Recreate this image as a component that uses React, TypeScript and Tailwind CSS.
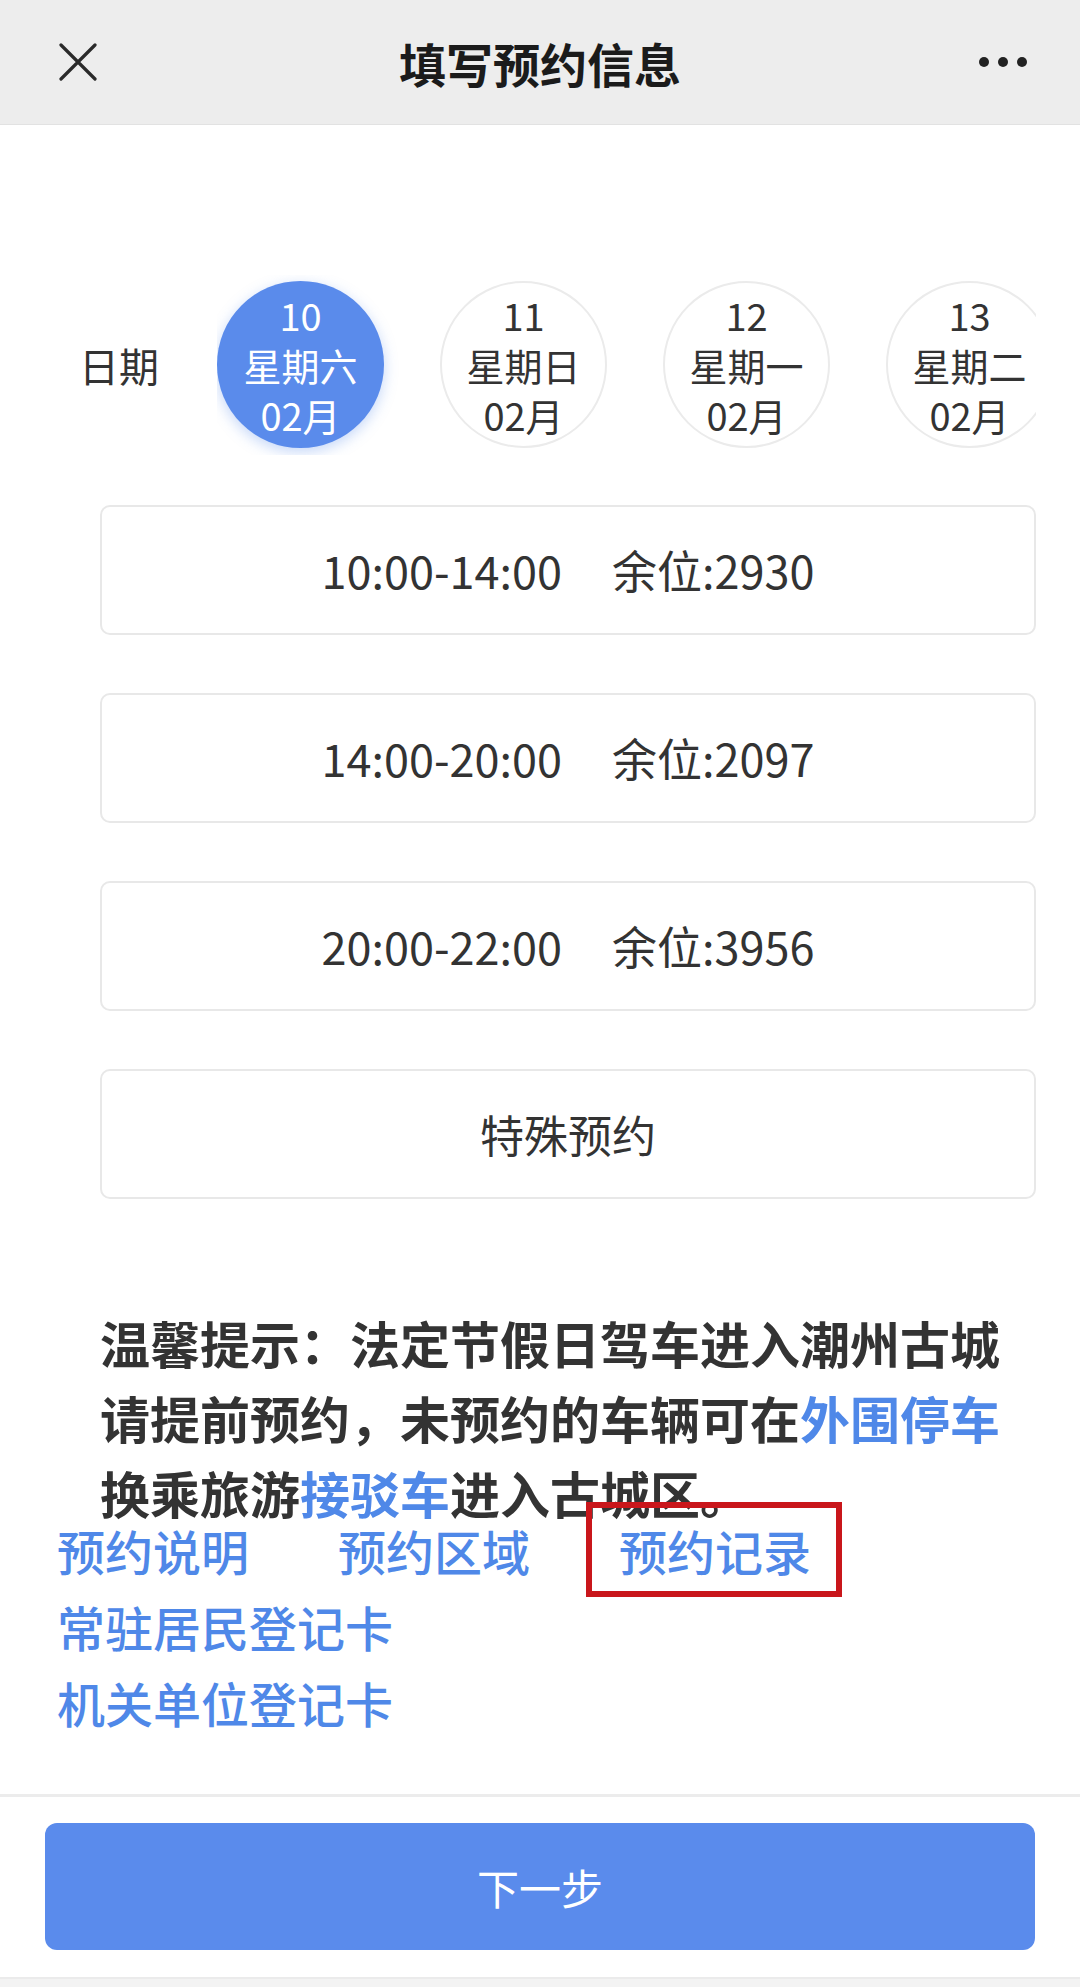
const dates = [
  { day: "10", week: "星期六", month: "02月", active: true },
  { day: "11", week: "星期日", month: "02月", active: false },
  { day: "12", week: "星期一", month: "02月", active: false },
  { day: "13", week: "星期二", month: "02月", active: false },
];

const slots = [
  { time: "10:00-14:00", left: "余位:2930" },
  { time: "14:00-20:00", left: "余位:2097" },
  { time: "20:00-22:00", left: "余位:3956" },
];

const font = { fontFamily: '"Noto Sans CJK SC", "Noto Sans", sans-serif' };

export default function App() {
  return (
    <div className="w-[1080px] h-[1987px] bg-white flex flex-col text-[#333]" style={font}>
      {/* Top bar */}
      <header className="h-[125px] shrink-0 bg-[#ededed] border-b border-[#e2e2e2] flex items-center">
        <div className="w-[140px] pl-[59px]">
          <svg width="38" height="38" viewBox="0 0 38 38" fill="none" stroke="#2a2a2a" strokeWidth="3.2" strokeLinecap="round">
            <path d="M2 2 L36 36 M36 2 L2 36" />
          </svg>
        </div>
        <h1 className="flex-1 text-center text-[47px] font-bold text-[#1b1b1b] leading-none">填写预约信息</h1>
        <div className="w-[140px] pr-[53px] flex justify-end items-center gap-[9px]">
          <span className="w-[10px] h-[10px] rounded-full bg-[#222]" />
          <span className="w-[10px] h-[10px] rounded-full bg-[#222]" />
          <span className="w-[10px] h-[10px] rounded-full bg-[#222]" />
        </div>
      </header>

      {/* Date picker */}
      <div className="mt-[156px] flex items-center pl-[79px] h-[167px]">
        <div className="w-[138px] shrink-0 text-[40px] leading-none text-[#333]">日期</div>
        <div className="w-[819px] h-[180px] overflow-hidden flex items-center gap-[56px]">
          {dates.map((d) => (
            <div
              key={d.day}
              className={
                d.active
                  ? "w-[167px] h-[167px] shrink-0 rounded-full bg-[#5a8beb] text-white flex flex-col items-center justify-center text-[38px] leading-[50px] shadow-[0_4px_14px_rgba(90,139,235,0.35)]"
                  : "w-[167px] h-[167px] shrink-0 rounded-full bg-white border-2 border-[#ebebeb] text-[#333] flex flex-col items-center justify-center text-[38px] leading-[50px]"
              }
            >
              <span>{d.day}</span>
              <span>{d.week}</span>
              <span>{d.month}</span>
            </div>
          ))}
        </div>
      </div>

      {/* Time slots */}
      <div className="mt-[57px] pl-[100px] pr-[44px] flex flex-col gap-[58px]">
        {slots.map((s) => (
          <div
            key={s.time}
            className="h-[130px] rounded-[10px] border-2 border-[#e8e8e8] flex items-center justify-center gap-[50px] text-[45px] text-[#333]"
          >
            <span>{s.time}</span>
            <span>{s.left}</span>
          </div>
        ))}
        <div className="h-[130px] rounded-[10px] border-2 border-[#e8e8e8] flex items-center justify-center text-[44px] text-[#333]">
          特殊预约
        </div>
      </div>

      {/* Notice */}
      <p className="mt-[106px] pl-[100px] pr-[44px] text-[50px] leading-[75px] font-bold text-[#333]">
        温馨提示：法定节假日驾车进入潮州古城请提前预约，未预约的车辆可在
        <span className="text-[#4f88e8]">外围停车</span>
        换乘旅游<span className="text-[#4f88e8]">接驳车</span>进入古城区。
      </p>

      {/* Links */}
      <div className="-mt-[18px] pl-[57px] text-[48px] font-medium text-[#4f88e8]">
        <div className="h-[76px] flex items-center gap-[89px]">
          <span className="leading-[70px]">预约说明</span>
          <span className="leading-[70px]">预约区域</span>
          <span className="relative block leading-[70px]">
            预约记录
            <span className="absolute -left-[33px] -right-[31px] -top-[13px] -bottom-[12px] border-[6px] border-[#c9161b]" />
          </span>
        </div>
        <div className="h-[76px] flex items-center">常驻居民登记卡</div>
        <div className="h-[76px] flex items-center">机关单位登记卡</div>
      </div>

      {/* Footer */}
      <div className="mt-[54px] border-t-[3px] border-[#ececec] pt-[26px] pb-[27px] pl-[45px] pr-[45px]">
        <button className="w-full h-[127px] rounded-[12px] bg-[#5a8bec] text-white text-[42px]">下一步</button>
      </div>
      <div className="flex-1 border-t-2 border-[#ebebeb] bg-[#f3f3f3]" />
    </div>
  );
}
